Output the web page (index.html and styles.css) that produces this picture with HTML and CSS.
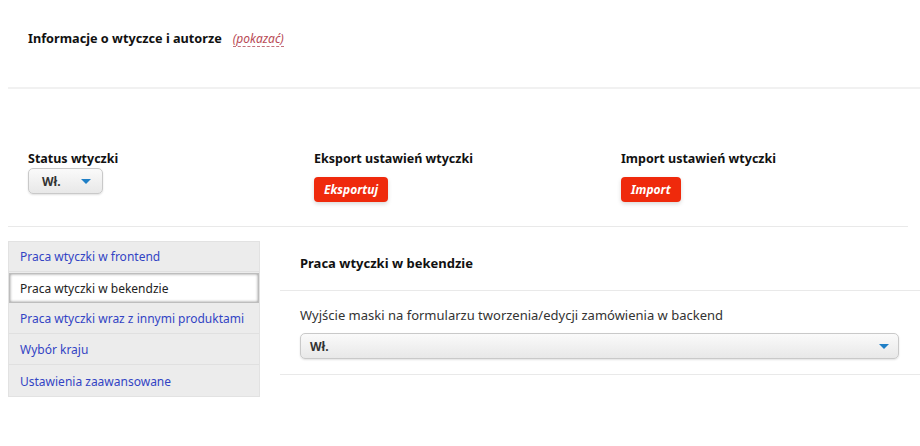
FILE: index.html
```html
<!DOCTYPE html>
<html>
<head>
    <meta charset="utf-8">
    <title>Ustawienia wtyczki</title>
    <link rel="stylesheet" href="styles.css">
</head>
<body>
    <div class="info">
        <h2>Informacje o wtyczce i autorze</h2>
        <a class="toggle" href="#">(pokazać)</a>
    </div>

    <div class="tools">
        <div class="tool">
            <h3>Status wtyczki</h3>
            <div class="select select-small">
                <span>Wł.</span>
                <span class="caret"></span>
            </div>
        </div>
        <div class="tool">
            <h3>Eksport ustawień wtyczki</h3>
            <button class="btn-red">Eksportuj</button>
        </div>
        <div class="tool">
            <h3>Import ustawień wtyczki</h3>
            <button class="btn-red">Import</button>
        </div>
    </div>

    <div class="main">
        <ul class="nav">
            <li><a href="#">Praca wtyczki w frontend</a></li>
            <li class="active"><a href="#">Praca wtyczki w bekendzie</a></li>
            <li><a href="#">Praca wtyczki wraz z innymi produktami</a></li>
            <li><a href="#">Wybór kraju</a></li>
            <li><a href="#">Ustawienia zaawansowane</a></li>
        </ul>
        <div class="panel">
            <div class="panel-head">Praca wtyczki w bekendzie</div>
            <div class="field">
                <label>Wyjście maski na formularzu tworzenia/edycji zamówienia w backend</label>
                <div class="select select-wide">
                    <span>Wł.</span>
                    <span class="caret"></span>
                </div>
            </div>
        </div>
    </div>
</body>
</html>
```

FILE: styles.css
```css
* {
    margin: 0;
    padding: 0;
    box-sizing: border-box;
}

body {
    font-family: "Noto Sans", "Open Sans", sans-serif;
    font-size: 12px;
    color: #222;
    background: #fff;
    padding-left: 8px;
}

.info {
    display: flex;
    align-items: baseline;
    gap: 11px;
    padding: 29px 20px 40px;
    border-bottom: 2px solid #f1f1f1;
}

.info h2 {
    font-size: 12.7px;
    font-weight: 700;
    color: #111;
}

.toggle {
    font-size: 12px;
    font-style: italic;
    color: #b84a55;
    text-decoration: none;
    border-bottom: 1px dashed #c4707a;
    line-height: 1.25;
}

.tools {
    display: grid;
    grid-template-columns: 286px 307px 1fr;
    padding: 61px 20px 24px;
    margin-right: 12px;
    border-bottom: 1px solid #e9e9e9;
}

.tool h3 {
    font-size: 12.5px;
    font-weight: 700;
    color: #111;
    margin-bottom: 1px;
}

.select {
    display: flex;
    align-items: center;
    justify-content: space-between;
    height: 26px;
    border: 1px solid #c9c9c9;
    border-radius: 5px;
    background: linear-gradient(#fafafa, #e8e8e8);
    box-shadow: 0 1px 2px rgba(0, 0, 0, 0.12);
    font-weight: 700;
    color: #333;
}

.select-small {
    width: 75px;
    padding: 0 11px 0 13px;
}

.select-wide {
    width: 599px;
    padding: 0 9px 0 9px;
}

.caret {
    width: 0;
    height: 0;
    border-left: 5px solid transparent;
    border-right: 5px solid transparent;
    border-top: 5px solid #1f7fc6;
}

.btn-red {
    margin-top: 9px;
    height: 25px;
    padding: 0 10px;
    background: #ef2a0c;
    color: #fff;
    border: none;
    border-radius: 4px;
    font-family: inherit;
    font-size: 12px;
    font-weight: 700;
    font-style: italic;
    box-shadow: 0 2px 4px rgba(0, 0, 0, 0.15);
}

.main {
    display: flex;
    gap: 20px;
    margin-top: 14px;
}

.nav {
    list-style: none;
    width: 252px;
    background: #ececec;
    border: 1px solid #e2e2e2;
    display: flex;
    flex-direction: column;
    gap: 1px;
    align-self: flex-start;
}

.nav li {
    height: 30px;
    display: flex;
    align-items: center;
    background: #ececec;
    border-bottom: 1px solid #e0e0e0;
}

.nav li:last-child {
    border-bottom: none;
}

.nav a {
    padding-left: 11px;
    color: #3344c4;
    text-decoration: none;
}

.nav li.active {
    background: #fff;
    box-shadow: inset 0 0 3px rgba(0, 0, 0, 0.45);
    border: 1px solid #bdbdbd;
}

.nav li.active a {
    color: #222;
    padding-left: 10px;
}

.panel {
    flex: 1;
}

.panel-head {
    font-size: 13px;
    font-weight: 700;
    color: #111;
    padding: 13px 20px 18px;
    border-bottom: 1px solid #e9e9e9;
}

.field {
    padding: 15px 20px 15px;
    border-bottom: 1px solid #e9e9e9;
}

.field label {
    display: block;
    font-size: 13px;
    color: #333;
    margin-bottom: 9px;
}
```
